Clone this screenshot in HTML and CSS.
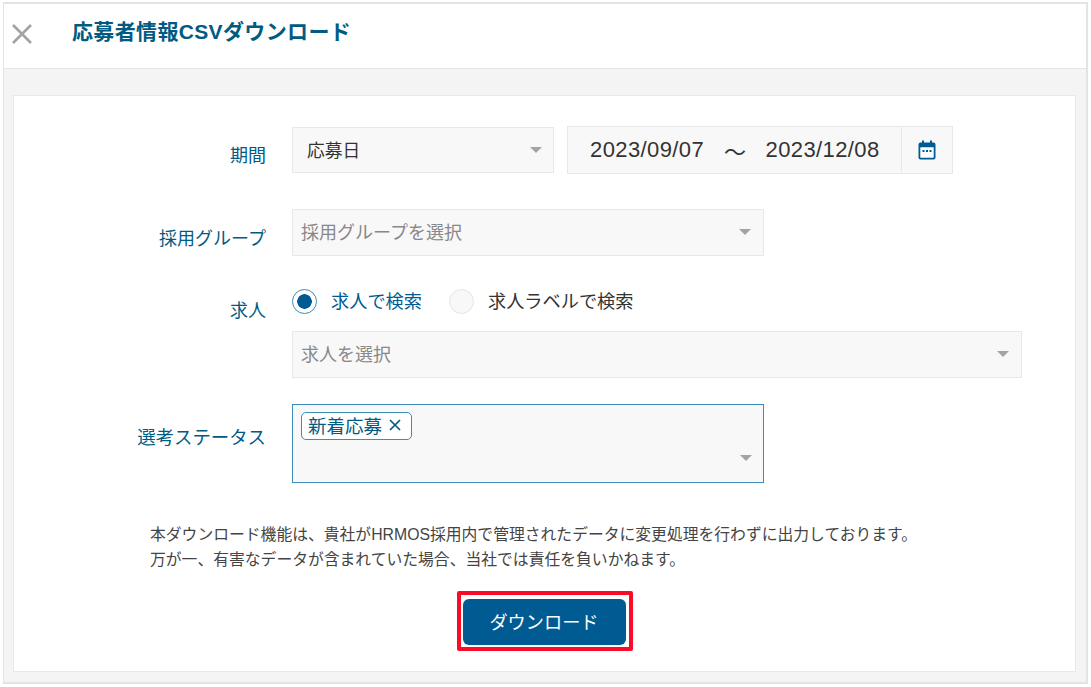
FILE: index.html
```html
<!DOCTYPE html>
<html lang="ja">
<head>
<meta charset="utf-8">
<title>応募者情報CSVダウンロード</title>
<link rel="stylesheet" href="styles.css">
</head>
<body>
<div class="modal">
  <header class="modal-head">
    <svg class="close" viewBox="0 0 20 20" width="20" height="20"><path d="M1 1L19 19M19 1L1 19" fill="none" stroke="#a3a3a3" stroke-width="2.600"/></svg>
    <h1 class="title">応募者情報CSVダウンロード</h1>
  </header>
  <div class="modal-body">
    <main class="card">
      <div class="row row-period">
        <div class="label label-period">期間</div>
        <div class="field period">
          <div class="select select-date"><span class="value">応募日</span><i class="caret"></i></div>
          <div class="daterange">
            <div class="dates"><span>2023/09/07</span><span class="tilde">〜</span><span>2023/12/08</span></div>
            <div class="cal">
              <svg viewBox="0 0 18 20" width="18" height="20"><path d="M4 0.5h2V2.5h6V0.5h2V2.5h1.5A2 2 0 0 1 17.500 4.500V17.500A2 2 0 0 1 15.500 19.500H2.500A2 2 0 0 1 .5 17.500V4.500A2 2 0 0 1 2.500 2.500H4Z" fill="#005b92"/><rect x="2.300" y="7.200" width="13.400" height="10.500" rx=".5" fill="#fff"/><path d="M4.500 10h2v2h-2zM8 10h2v2H8zM11.500 10h2v2h-2z" fill="#005b92"/></svg>
            </div>
          </div>
        </div>
      </div>
      <div class="row row-group">
        <div class="label label-group">採用グループ</div>
        <div class="select select-group"><span class="placeholder">採用グループを選択</span><i class="caret"></i></div>
      </div>
      <div class="row row-job">
        <div class="label label-job">求人</div>
        <div class="field job">
          <div class="radios">
            <label class="radio on"><span class="dot"></span><span class="radio-text">求人で検索</span></label>
            <label class="radio"><span class="dot"></span><span class="radio-text">求人ラベルで検索</span></label>
          </div>
          <div class="select select-job"><span class="placeholder">求人を選択</span><i class="caret"></i></div>
        </div>
      </div>
      <div class="row row-status">
        <div class="label label-status">選考ステータス</div>
        <div class="multi">
          <span class="tag">新着応募<svg viewBox="0 0 12 12" width="12" height="12"><path d="M1 1L11 11M11 1L1 11" fill="none" stroke="#005b82" stroke-width="1.700"/></svg></span>
          <i class="caret"></i>
        </div>
      </div>
      <p class="note">本ダウンロード機能は、貴社がHRMOS採用内で管理されたデータに変更処理を行わずに出力しております。<br>万が一、有害なデータが含まれていた場合、当社では責任を負いかねます。</p>
      <div class="actions">
        <div class="highlight"><button class="btn" type="button">ダウンロード</button></div>
      </div>
    </main>
  </div>
</div>
</body>
</html>
```
FILE: styles.css
```css
* { box-sizing: border-box; }
html, body { margin: 0; height: 100%; background: #fff; }
body {
  padding: 2px 3px 3px;
  font-family: "Liberation Sans", "Noto Sans CJK JP", sans-serif;
  color: #333;
  font-size: 18px;
}
.modal {
  width: 1085px;
  height: 682px;
  border: 2px solid #e3e3e3;
  border-width: 2px 2px 2px 1px;
  background: #f4f4f4;
  display: flex;
  flex-direction: column;
}
.modal-head {
  height: 65px;
  flex: none;
  background: #fff;
  border-bottom: 1px solid #e6e6e6;
  display: flex;
  align-items: center;
  padding-left: 8px;
}
.close { margin-bottom: 5px; flex: none; }
.title {
  margin: 0 0 9px 40px;
  font-size: 21px;
  letter-spacing: .35px;
  font-weight: 700;
  color: #005b82;
  line-height: 28px;
}
.modal-body { flex: 1; padding: 26px 10px 10px 9px; display: flex; }
.card {
  flex: 1;
  background: #fff;
  border: 1px solid #e8e8e8;
  padding-top: 30px;
}
.row { display: flex; align-items: flex-start; }
.label {
  width: 252px;
  flex: none;
  text-align: right;
  color: #005b82;
  font-size: 18px;
  line-height: 24px;
}
.field { margin-left: 26px; }
.period { display: flex; align-items: flex-start; }
.label-period { margin-top: 18px; }
.label-group { margin-top: 18px; }
.label-job { margin-top: 11px; }
.label-status { margin-top: 22px; font-size: 18.400px; }
.row-group { margin-top: 35px; }
.row-job { margin-top: 32px; }
.row-status { margin-top: 26px; }
.select {
  background: #f8f8f8;
  border: 1px solid #e8e8e8;
  display: flex;
  align-items: center;
  justify-content: space-between;
  position: relative;
  font-size: 18px;
}
.select-date { width: 262px; height: 46px; margin-top: 1px; padding: 0 11px 2px 14px; }
.select-date .value { font-size: 17.700px; }
.select-group { width: 472px; height: 47px; margin-left: 26px; padding: 0 12px 3px 8px; }
.select-job { width: 730px; height: 47px; margin-top: 17px; padding: 0 12px 3px 8px; }
.value { color: #333; }
.placeholder { color: #888; }
.caret {
  width: 0;
  height: 0;
  border-left: 6px solid transparent;
  border-right: 6px solid transparent;
  border-top: 6px solid #a3a3a3;
  flex: none;
}
.select .caret { margin-top: 2px; }
.daterange {
  width: 386px;
  height: 48px;
  margin-left: 13px;
  display: flex;
  background: #f8f8f8;
  border: 1px solid #e8e8e8;
}
.dates {
  flex: 1;
  display: flex;
  align-items: center;
  padding-left: 22px;
  font-size: 22px;
  letter-spacing: .4px;
  color: #333;
}
.tilde { margin: 0 19px 0 20px; }
.cal {
  width: 51px;
  border-left: 1px solid #e8e8e8;
  display: flex;
  align-items: center;
  justify-content: center;
}
.radios { display: flex; align-items: center; height: 26px; }
.radio { display: flex; align-items: center; font-size: 18.200px; color: #333; margin-right: 27px; }
.radio-text { margin-top: -2px; }
.radio.on { color: #005b92; }
.dot {
  width: 25px;
  height: 25px;
  border-radius: 50%;
  border: 1px solid #e6e6e6;
  background: #f8f8f8;
  margin-right: 14px;
  flex: none;
}
.radio.on .dot {
  background: #fff radial-gradient(circle, #005b92 0 7px, transparent 7.500px);
  border-color: #3e8cb8;
}
.multi {
  width: 472px;
  height: 79px;
  margin-left: 26px;
  background: #f8f8f8;
  border: 1px solid #3e8cb8;
  padding: 7px 8px;
  position: relative;
}
.multi .caret { position: absolute; right: 11px; top: 50px; }
.tag {
  display: inline-flex;
  align-items: center;
  gap: 7px;
  height: 28px;
  padding: 0 10px 2px 6px;
  background: #fff;
  border: 1px solid #3e8cb8;
  border-radius: 5px;
  color: #005b82;
  font-size: 18.500px;
}
.note {
  margin: 39px 0 0 136px;
  font-size: 15.800px;
  line-height: 25px;
  color: #444;
}
.actions { display: flex; justify-content: center; margin-top: 19px; }
.highlight {
  border: 4px solid #fa0b27;
  padding: 4px 3px 2px 2px;
  border-radius: 2px;
}
.btn {
  display: block;
  width: 163px;
  height: 46px;
  padding: 0 0 3px;
  background: #005b92;
  color: #fff;
  border: 0;
  border-radius: 6px;
  font: 18.200px "Liberation Sans", "Noto Sans CJK JP", sans-serif;
}
```
